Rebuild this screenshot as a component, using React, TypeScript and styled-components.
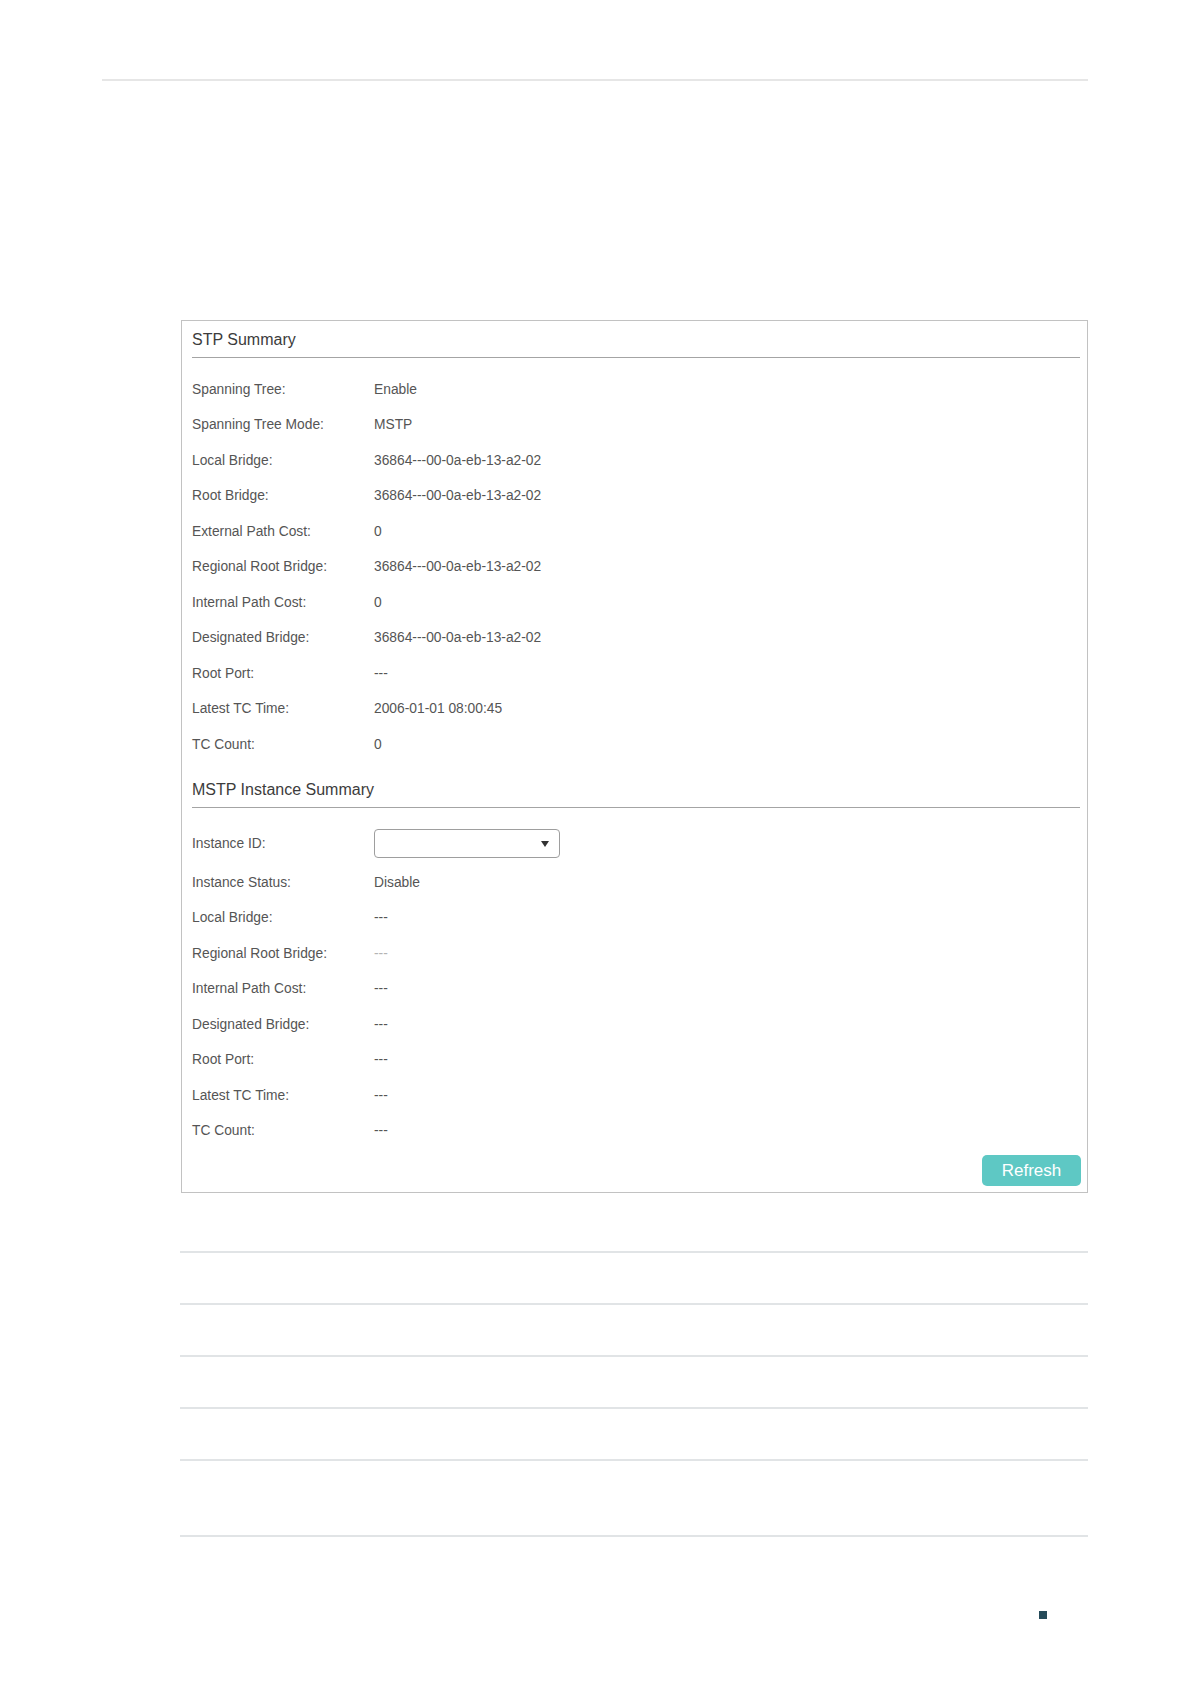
import styled, { createGlobalStyle } from 'styled-components'

const GlobalStyle = createGlobalStyle`
  html, body {
    margin: 0;
    padding: 0;
    background: #ffffff;
  }
  body {
    font-family: "Liberation Sans", Arial, sans-serif;
  }
`

const Page = styled.div`
  width: 1191px;
  min-height: 1684px;
  padding-top: 79px;
  box-sizing: border-box;
`

const TopRule = styled.div`
  margin-left: 102px;
  width: 986px;
  height: 2px;
  background: #e6e6e6;
`

const Panel = styled.div`
  margin: 239px 0 0 181px;
  width: 907px;
  box-sizing: border-box;
  border: 1px solid #c2c2c2;
  padding: 0 6px 6px 10px;
  display: flex;
  flex-direction: column;
`

const SectionTitle = styled.div<{ $gap?: number }>`
  margin-top: ${p => p.$gap ?? 0}px;
  height: 35.5px;
  line-height: 37px;
  font-size: 16px;
  color: #3c3c3c;
  border-bottom: 1px solid #a4a4a4;
  margin-right: 1px;
`

const Rows = styled.div<{ $top: number }>`
  margin-top: ${p => p.$top}px;
  display: flex;
  flex-direction: column;
`

const Row = styled.div<{ $h?: number }>`
  display: grid;
  grid-template-columns: 182px 1fr;
  align-items: center;
  height: ${p => p.$h ?? 35.5}px;
  font-size: 13.8px;
  color: #555;
`

const Label = styled.span``

const Value = styled.span<{ $muted?: boolean }>`
  color: ${p => (p.$muted ? '#b4b4b4' : '#555')};
`

const Select = styled.div`
  width: 186px;
  height: 29px;
  box-sizing: border-box;
  border: 1px solid #9e9e9e;
  border-radius: 4px;
  display: flex;
  align-items: center;
  justify-content: flex-end;
  padding-right: 10px;
`

const Caret = styled.span`
  width: 0;
  height: 0;
  border-left: 4.5px solid transparent;
  border-right: 4.5px solid transparent;
  border-top: 6px solid #333;
`

const Footer = styled.div`
  display: flex;
  justify-content: flex-end;
  margin-top: 6.5px;
`

const Button = styled.button`
  width: 99px;
  height: 31px;
  border: none;
  border-radius: 5px;
  background: #5ec8c4;
  color: #fff;
  font-family: "Liberation Sans", Arial, sans-serif;
  font-size: 17px;
  padding: 0;
  cursor: pointer;
`

const Lines = styled.div`
  margin-left: 180px;
  width: 908px;
  display: flex;
  flex-direction: column;
`

const Line = styled.div<{ $gap: number }>`
  margin-top: ${p => p.$gap}px;
  height: 2px;
  background: #e1e4e6;
`

const Marker = styled.div`
  margin: 74px 0 0 1039px;
  width: 8px;
  height: 8px;
  background: #264b5a;
`

const stp: [string, string][] = [
  ['Spanning Tree:', 'Enable'],
  ['Spanning Tree Mode:', 'MSTP'],
  ['Local Bridge:', '36864---00-0a-eb-13-a2-02'],
  ['Root Bridge:', '36864---00-0a-eb-13-a2-02'],
  ['External Path Cost:', '0'],
  ['Regional Root Bridge:', '36864---00-0a-eb-13-a2-02'],
  ['Internal Path Cost:', '0'],
  ['Designated Bridge:', '36864---00-0a-eb-13-a2-02'],
  ['Root Port:', '---'],
  ['Latest TC Time:', '2006-01-01 08:00:45'],
  ['TC Count:', '0'],
]

const mstp: [string, string, boolean?][] = [
  ['Instance Status:', 'Disable'],
  ['Local Bridge:', '---'],
  ['Regional Root Bridge:', '---', true],
  ['Internal Path Cost:', '---'],
  ['Designated Bridge:', '---'],
  ['Root Port:', '---'],
  ['Latest TC Time:', '---'],
  ['TC Count:', '---'],
]

const lineGaps = [58, 50, 50, 50, 50, 74]

function App() {
  return (
    <>
      <GlobalStyle />
      <Page>
        <TopRule />
        <Panel>
          <SectionTitle>STP Summary</SectionTitle>
          <Rows $top={14}>
            {stp.map(([l, v]) => (
              <Row key={l}>
                <Label>{l}</Label>
                <Value>{v}</Value>
              </Row>
            ))}
          </Rows>
          <SectionTitle $gap={9}>MSTP Instance Summary</SectionTitle>
          <Rows $top={15}>
            <Row $h={42}>
              <Label>Instance ID:</Label>
              <Select>
                <Caret />
              </Select>
            </Row>
            {mstp.map(([l, v, muted]) => (
              <Row key={l}>
                <Label>{l}</Label>
                <Value $muted={muted}>{v}</Value>
              </Row>
            ))}
          </Rows>
          <Footer>
            <Button>Refresh</Button>
          </Footer>
        </Panel>
        <Lines>
          {lineGaps.map((g, i) => (
            <Line key={i} $gap={g} />
          ))}
        </Lines>
        <Marker />
      </Page>
    </>
  )
}

export default App
